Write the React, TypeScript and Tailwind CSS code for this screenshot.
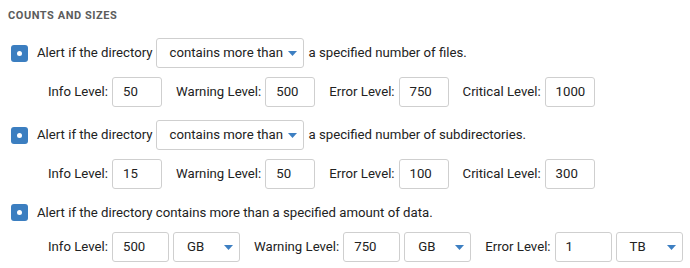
import React from "react";

const Caret = () => (
  <svg width="9" height="5" viewBox="0 0 9 5" className="shrink-0">
    <path d="M0 0 L9 0 L4.5 5 Z" fill="#3d7fc2" />
  </svg>
);

const Check = () => (
  <span className="flex h-[17px] w-[17px] shrink-0 items-center justify-center rounded-[3px] bg-[#3b7ec0]">
    <span className="h-[5px] w-[5px] rounded-full bg-white" />
  </span>
);

const Select = ({ value, width }: { value: string; width: string }) => (
  <div
    className={`flex h-[30px] ${width} shrink-0 items-center justify-between whitespace-nowrap rounded-[3px] border border-[#cfcfcf] bg-white pl-[13px] pr-[6px]`}
  >
    <span>{value}</span>
    <Caret />
  </div>
);

const Field = ({
  label,
  value,
  width = "w-[50px]",
  first = false,
}: {
  label: string;
  value: string;
  width?: string;
  first?: boolean;
}) => (
  <div className={`flex shrink-0 items-center whitespace-nowrap ${first ? "" : "ml-[14px]"}`}>
    <span>{label}</span>
    <div
      className={`ml-[4px] flex h-[30px] ${width} items-center rounded-[3px] border border-[#cfcfcf] bg-white px-[10px]`}
    >
      {value}
    </div>
  </div>
);

const SizeField = ({
  label,
  value,
  unit,
  first = false,
}: {
  label: string;
  value: string;
  unit: string;
  first?: boolean;
}) => (
  <div className={`flex shrink-0 items-center whitespace-nowrap ${first ? "" : "ml-[14px]"}`}>
    <span>{label}</span>
    <div className="ml-[4px] flex h-[30px] w-[57px] items-center rounded-[3px] border border-[#cfcfcf] bg-white px-[10px]">
      {value}
    </div>
    <div className="ml-[4px]">
      <Select value={unit} width="w-[67px]" />
    </div>
  </div>
);

export default function App() {
  return (
    <div className="h-[268px] w-[690px] bg-white pt-[9px] text-[13.2px] text-[#222] font-['Roboto',sans-serif]">
      <h3 className="pl-[8px] text-[11px] font-bold uppercase tracking-[0.05em] text-[#5c5c5c] leading-[14px]">
        Counts and Sizes
      </h3>

      {/* files */}
      <div className="mt-[15px] flex items-center whitespace-nowrap pl-[11px]">
        <Check />
        <span className="ml-[9px]">Alert if the directory</span>
        <div className="ml-[3px]">
          <Select value="contains more than" width="w-[148px]" />
        </div>
        <span className="ml-[5px]">a specified number of files.</span>
      </div>
      <div className="mt-[9px] flex items-center pl-[48px]">
        <Field label="Info Level:" value="50" first />
        <Field label="Warning Level:" value="500" />
        <Field label="Error Level:" value="750" />
        <Field label="Critical Level:" value="1000" />
      </div>

      {/* subdirectories */}
      <div className="mt-[13px] flex items-center whitespace-nowrap pl-[11px]">
        <Check />
        <span className="ml-[9px]">Alert if the directory</span>
        <div className="ml-[3px]">
          <Select value="contains more than" width="w-[148px]" />
        </div>
        <span className="ml-[5px]">a specified number of subdirectories.</span>
      </div>
      <div className="mt-[9px] flex items-center pl-[48px]">
        <Field label="Info Level:" value="15" first />
        <Field label="Warning Level:" value="50" />
        <Field label="Error Level:" value="100" />
        <Field label="Critical Level:" value="300" />
      </div>

      {/* data */}
      <div className="mt-[13px] flex h-[21px] items-center whitespace-nowrap pl-[11px]">
        <Check />
        <span className="ml-[9px]">Alert if the directory contains more than a specified amount of data.</span>
      </div>
      <div className="mt-[9px] flex items-center pl-[48px]">
        <SizeField label="Info Level:" value="500" unit="GB" first />
        <SizeField label="Warning Level:" value="750" unit="GB" />
        <SizeField label="Error Level:" value="1" unit="TB" />
      </div>
    </div>
  );
}
